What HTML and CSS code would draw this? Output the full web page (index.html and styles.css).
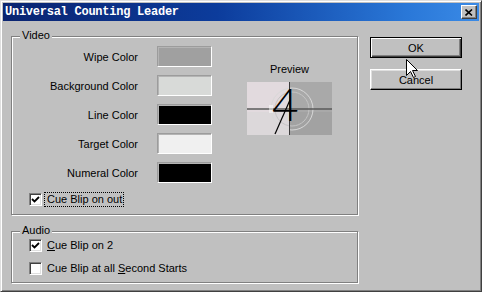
FILE: index.html
```html
<!DOCTYPE html>
<html>
<head>
<meta charset="utf-8">
<title>Universal Counting Leader</title>
<link rel="stylesheet" href="styles.css">
</head>
<body>
<div class="dialog">
  <div class="titlebar">
    <span class="title">Universal Counting Leader</span>
    <span class="close"><svg width="8" height="7" viewBox="0 0 8 7"><path d="M0.5 0.5 L7 6.5 M7 0.5 L0.5 6.5" stroke="#000" stroke-width="1.6"/></svg></span>
  </div>
  <div class="content">
    <div class="groups">
      <div class="group video">
        <span class="legend">Video</span>
        <div class="video-main">
          <div class="colors">
            <span class="label">Wipe Color</span><span class="swatch wipe"></span>
            <span class="label">Background Color</span><span class="swatch bg"></span>
            <span class="label">Line Color</span><span class="swatch line"></span>
            <span class="label">Target Color</span><span class="swatch target"></span>
            <span class="label">Numeral Color</span><span class="swatch numeral"></span>
          </div>
          <div class="preview">
            <div class="preview-label">Preview</div>
            <div class="preview-pic">
              <svg width="85" height="53" viewBox="0 0 85 53">
                <rect x="0" y="0" width="43" height="53" fill="#e2dade"/>
                <rect x="0" y="30" width="43" height="23" fill="#dcd8da"/>
                <rect x="43" y="0" width="42" height="53" fill="#a9a9a9"/>
                <rect x="43" y="30" width="42" height="23" fill="#a2a2a2"/>
                <circle cx="45" cy="27" r="21" fill="none" stroke="#d8d8d8" stroke-width="1"/>
                <circle cx="45" cy="27" r="17" fill="none" stroke="#c4c4c4" stroke-width="1"/>
                <line x1="0" y1="27" x2="85" y2="27" stroke="#5a5a5a" stroke-width="1.5"/>
                <line x1="42.5" y1="0" x2="42.5" y2="53" stroke="#3a3a3a" stroke-width="1"/>
                <line x1="23" y1="23" x2="23" y2="31" stroke="#fff" stroke-width="1"/>
                <line x1="25" y1="23" x2="25" y2="31" stroke="#fff" stroke-width="1"/>
                <line x1="43" y1="18" x2="28" y2="52" stroke="#000" stroke-width="1.2"/>
              </svg>
              <span class="numeral-4">4</span>
            </div>
          </div>
        </div>
        <div class="check-row">
          <span class="box"><svg width="9" height="9" viewBox="0 0 9 9"><path d="M1 4 L3.5 6.5 L8 2" fill="none" stroke="#000" stroke-width="1.8"/></svg></span>
          <span class="check-text focused">Cue Blip on out</span>
        </div>
      </div>
      <div class="group audio">
        <span class="legend">Audio</span>
        <div class="check-row">
          <span class="box"><svg width="9" height="9" viewBox="0 0 9 9"><path d="M1 4 L3.5 6.5 L8 2" fill="none" stroke="#000" stroke-width="1.8"/></svg></span>
          <span class="check-text"><u>C</u>ue Blip on 2</span>
        </div>
        <div class="check-row">
          <span class="box"></span>
          <span class="check-text">Cue Blip at all <u>S</u>econd Starts</span>
        </div>
      </div>
    </div>
    <div class="buttons">
      <button class="btn default">OK</button>
      <button class="btn">Cancel</button>
    </div>
  </div>
  <svg class="cursor" width="13" height="20" viewBox="0 0 13 20"><path d="M0.5 0.5 V16.5 L4.5 12.5 L7.5 18.5 L9.5 17.5 L6.5 11.5 H11.5 Z" fill="#fff" stroke="#000" stroke-width="1"/></svg>
</div>
</body>
</html>
```

FILE: styles.css
```css
* { box-sizing: border-box; }
body { margin: 0; background: #c0c0c0; font-family: "Liberation Sans", Arial, sans-serif; font-size: 11px; color: #000; }

.dialog { position: relative; width: 482px; height: 292px; padding: 2px; background: #c0c0c0;
  border: 1px solid; border-color: #dfdfdf #404040 #404040 #dfdfdf;
  box-shadow: inset 1px 1px #fff, inset -1px -1px #808080; }

.titlebar { display: flex; align-items: center; justify-content: space-between; height: 18px; padding: 0 2px 0 2px;
  background: linear-gradient(to right, #0a2470, #0c3c9c 45%, #2a78d8 85%, #3a8ae6); }
.titlebar .title { color: #fff; font-family: "Liberation Mono", "Courier New", monospace; font-weight: bold; font-size: 12px; letter-spacing: -0.25px; }
.titlebar .close { display: flex; align-items: center; justify-content: center; width: 16px; height: 14px; background: #c0c0c0;
  border: 1px solid; border-color: #fff #404040 #404040 #fff; box-shadow: inset -1px -1px #808080; }

.content { display: flex; gap: 12px; padding: 15px 0 0 8px; }
.groups { display: flex; flex-direction: column; gap: 16px; width: 347px; }

.group { position: relative; border: 1px solid #808080; box-shadow: inset 1px 1px #fff, 1px 1px #fff; }
.group .legend { position: absolute; top: -8px; left: 8px; padding: 0 2px; line-height: 13px; background: #c0c0c0; }

.video { padding: 9px 0 7px 0; }
.video-main { display: flex; gap: 35px; }
.colors { display: grid; grid-template-columns: 126px 55px; column-gap: 19px; row-gap: 8px; }
.colors .label { display: flex; align-items: center; justify-content: flex-end; height: 21px; }
.swatch { height: 21px; border: 1px solid; border-color: #9c9c9c #fff #fff #9c9c9c; box-shadow: inset 1px 1px #b4b4b4; }
.swatch.wipe { background: #a0a0a0; }
.swatch.bg { background: #d8dad8; }
.swatch.line { background: #000; }
.swatch.target { background: #f0f0f0; }
.swatch.numeral { background: #000; }

.preview { margin-top: 17px; width: 85px; }
.preview-label { text-align: center; line-height: 13px; margin-bottom: 6px; }
.preview-pic { position: relative; width: 85px; height: 53px; }
.preview-pic svg { display: block; }
.numeral-4 { position: absolute; left: 25px; top: 4px; font-family: "Lato", "Liberation Sans", sans-serif; font-weight: 300; font-size: 46px; line-height: 36px; }

.check-row { display: flex; align-items: center; height: 15px; margin-left: 17px; }
.video .check-row { margin-top: 9px; }
.box { display: flex; align-items: center; justify-content: center; width: 13px; height: 13px; background: #fff;
  border: 1px solid; border-color: #808080 #fff #fff #808080; box-shadow: inset 1px 1px #404040, inset -1px -1px #dfdfdf; }
.check-text { margin-left: 3px; padding: 0 1px 0 2px; line-height: 13px; }
.check-text.focused { outline: 1px dotted #000; }

.audio { display: flex; flex-direction: column; gap: 8px; padding: 6px 0 6px 0; }

.buttons { display: flex; flex-direction: column; gap: 11px; padding-top: 1px; }
.btn { width: 92px; height: 21px; padding: 0; font: inherit; color: #000; background: #c0c0c0;
  border: 1px solid; border-color: #fff #000 #000 #fff; box-shadow: inset -1px -1px #808080, inset 1px 1px #dfdfdf; }
.btn.default { border-color: #000; box-shadow: inset 1px 1px #fff, inset -1px -1px #404040, inset -2px -2px #808080; }

.cursor { position: absolute; left: 405px; top: 58px; }
```
